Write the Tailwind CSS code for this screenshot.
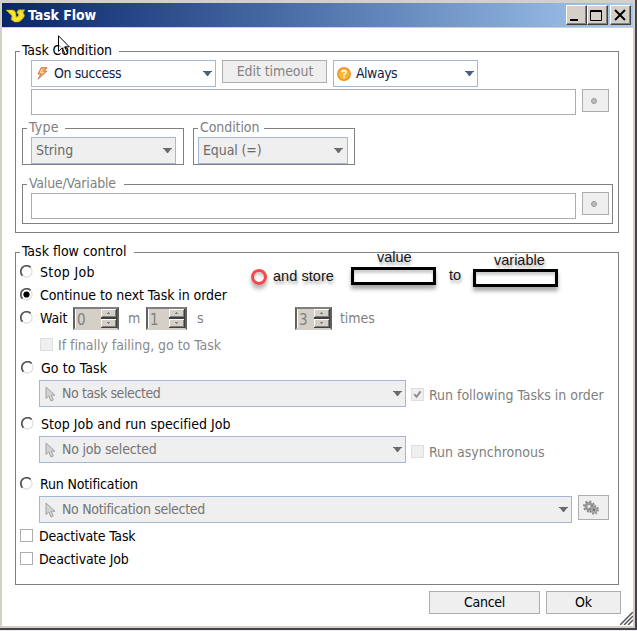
<!DOCTYPE html>
<html lang="en">
<head>
<meta charset="utf-8">
<title>Task Flow</title>
<script src="https://cdn.jsdelivr.net/npm/@tailwindcss/browser@4"></script>
</head>
<body class="w-[637px] h-[631px] overflow-hidden bg-[#ececec]">
<svg class="hidden">
  <symbol id="pointer" viewBox="0 0 11 16"><path d="M1 1V12.5L3.8 10L6 15L8.3 14L6.2 9.3H10Z" fill="#d2d2d2" stroke="#a2a2a2" stroke-width="1"/></symbol>
  <symbol id="down" viewBox="0 0 9 5"><path d="M0 0H9V1H8L5 5H4L1 1H0Z" fill="currentColor"/></symbol>
  <symbol id="radio" viewBox="0 0 13 13"><circle cx="6.5" cy="6.5" r="5.6" fill="#fff" stroke="#dcdad6" stroke-width="1.1"/><path d="M2.5 10.6A5.7 5.7 0 0 1 10.6 2.4" fill="none" stroke="#555" stroke-width="1.7"/></symbol>
  <symbol id="spin" viewBox="0 0 16 19">
    <rect width="16" height="19" fill="#404040"/>
    <path d="M0 0H15V8H0ZM0 10H15V18H0Z" fill="#fff"/><path d="M1 1H15V8H1ZM1 11H15V18H1Z" fill="#808080"/><path d="M1 1H14V7H1ZM1 11H14V17H1Z" fill="#d4d0c8"/>
    <path d="M7 3H8V4H9V5H6V4H7Z M6 13H9V14H8V15H7V14H6Z" fill="#808080"/>
  </symbol>
</svg>

<div class="relative w-[637px] h-[630px] border-r-2 border-b-2 border-[#45424a] bg-[#d4d0c8] pt-[3px] pl-[2px] pr-[2px] font-['DejaVu_Sans_Condensed','DejaVu_Sans',sans-serif] text-[14px] tracking-[-0.08px] whitespace-nowrap text-black">

  <!-- Title bar -->
  <header class="flex h-6 items-center bg-linear-to-r from-[#0a246a] to-[#a6caf0] pl-[4px] pr-[2px]">
    <svg class="mr-[2px] mt-[2px] shrink-0" width="20" height="14" viewBox="0 0 20 14"><path d="M0 1H6C9 1 10 3 10 6V7.5C11.5 8 12.8 7 12.3 5.5L10.8 3.2L12.5 .8H18.8L17.2 3.5L18.6 6.5C18 9 15 12 12.5 13H8.5L5 10.5L6 7L3.5 4.5Z" fill="#f3d91c" stroke="#a99a28" stroke-width=".5"/><path d="M3 2.5H6L8 5V9.5L10 11L14 9L15.5 6.5L14.5 3" fill="none" stroke="#fff04a" stroke-width="1.2"/></svg>
    <h1 class="flex-1 text-[14px] leading-6 font-bold text-white tracking-[-0.08px]">Task Flow</h1>
    <div class="flex">
      <div class="h-5 w-[21px] border border-t-white border-l-white border-r-[#404040] border-b-[#404040] bg-[#d4d0c8]"><svg class="size-full" viewBox="0 0 19 18"><path d="M18.5 0V17.5H0" fill="none" stroke="#808080"/><path d="M3 13H11V15H3Z"/></svg></div>
      <div class="h-5 w-[21px] border border-t-white border-l-white border-r-[#404040] border-b-[#404040] bg-[#d4d0c8]"><svg class="size-full" viewBox="0 0 19 18"><path d="M18.5 0V17.5H0" fill="none" stroke="#808080"/><path d="M2.5 4.5H13.5V14.5H2.5ZM2 5.5H14" fill="none" stroke="#000"/></svg></div>
      <div class="ml-[2px] h-5 w-[21px] border border-t-white border-l-white border-r-[#404040] border-b-[#404040] bg-[#d4d0c8]"><svg class="size-full" viewBox="0 0 19 18"><path d="M18.5 0V17.5H0" fill="none" stroke="#808080"/><path d="M4 4L14 14M14 4L4 14" fill="none" stroke="#000" stroke-width="1.9"/></svg></div>
    </div>
  </header>

  <main class="relative mt-px h-[598px] bg-white pt-[23px] pl-[13px] pr-[14px]">
    <!-- Task condition -->
    <section class="relative h-[182px] border border-[#808080] pt-2 pl-[15px]">
      <h2 class="absolute left-[4px] top-[-12px] w-[99px] bg-white pl-[2px] leading-5">Task Condition</h2>
      <div class="flex items-start">
        <div class="flex h-[27px] w-[185px] items-center border border-[#a4b8d6] bg-white pl-[5px] pr-[3px] text-[#101c48]">
          <svg width="11" height="13" viewBox="0 0 11 13"><path d="M4.2 .7H10L7.2 4.2H9.8L1 12.2L3.8 7H1Z" fill="#f6b04c" stroke="#c96a5b" stroke-width=".9"/><path d="M5 2L3.5 5.5H7" fill="none" stroke="#ffe5a0"/></svg>
          <span class="ml-[6px] flex-1 tracking-[-0.4px]">On success</span>
          <svg class="h-[5px] w-[9px] text-[#48607c]"><use href="#down"/></svg>
        </div>
        <button class="ml-[6px] h-[23px] w-[105px] border border-[#adadad] bg-[#efefef] pl-px text-[#838383]">Edit timeout</button>
        <div class="ml-[6px] flex h-[27px] w-[145px] items-center border border-[#a4b8d6] bg-white pl-[3px] pr-[3px] text-[#101c48]">
          <svg width="14" height="14" viewBox="0 0 14 14"><circle cx="7" cy="7" r="6.3" fill="#fbb52d" stroke="#ee8a2c" stroke-width="1.2"/><path d="M4.9 5.4Q5 3.5 7 3.5Q9.1 3.6 9.1 5.3Q9 6.4 7.1 7.3V8.5M7.1 9.6V11" fill="none" stroke="#fff" stroke-width="1.5"/></svg>
          <span class="ml-[5px] flex-1 tracking-[-0.5px]">Always</span>
          <svg class="h-[5px] w-[9px] text-[#48607c]"><use href="#down"/></svg>
        </div>
      </div>
      <div class="mt-[2px] flex items-start">
        <div class="h-[26px] w-[545px] border border-[#adadad]"></div>
        <div class="ml-[6px] flex h-[23px] w-[27px] items-center border border-[#adadad] bg-[#efefef] pl-[8px]"><div class="size-[6px] rounded-full border border-[#999] bg-[#bbb]"></div></div>
      </div>
      <div class="-ml-[9px] mt-[13px] flex text-[#808080]">
        <div class="relative h-[37px] w-[162px] border border-[#808080] pt-2 pl-2">
          <h3 class="absolute left-[4px] top-[-12px] w-[38px] bg-white pl-[2px] leading-5 tracking-[0.3px]">Type</h3>
          <div class="flex h-[27px] w-[145px] items-center border border-[#a4b8d6] bg-[#efefef] pl-1 pr-[3px] text-[#6a6a6a]"><span class="flex-1">String</span><svg class="h-[5px] w-[9px]"><use href="#down"/></svg></div>
        </div>
        <div class="relative ml-[9px] h-[37px] w-[162px] border border-[#808080] pt-2 pl-1">
          <h3 class="absolute left-[4px] top-[-12px] w-[66px] bg-white pl-[2px] leading-5">Condition</h3>
          <div class="flex h-[27px] w-[150px] items-center border border-[#a4b8d6] bg-[#efefef] pl-1 pr-[4px] text-[#6a6a6a]"><span class="flex-1 tracking-[-0.1px]">Equal (=)</span><svg class="h-[5px] w-[9px]"><use href="#down"/></svg></div>
        </div>
      </div>
      <div class="relative -ml-[9px] mt-[19px] flex h-[40px] w-[591px] items-start border border-[#808080] pt-[7px] pl-2 text-[#808080]">
        <h3 class="absolute left-[4px] top-[-12px] w-[97px] bg-white pl-[2px] leading-5 tracking-[-0.2px]">Value/Variable</h3>
        <div class="mt-px h-[26px] w-[545px] border border-[#adadad]"></div>
        <div class="ml-[6px] flex h-[23px] w-[27px] items-center border border-[#adadad] bg-[#efefef] pl-[8px]"><div class="size-[6px] rounded-full border border-[#999] bg-[#bbb]"></div></div>
      </div>
    </section>

    <!-- Task flow control -->
    <section class="relative mt-[19px] h-[333px] border border-[#808080] pt-2">
      <h2 class="absolute left-[4px] top-[-12px] w-[114px] bg-white pl-[2px] leading-5 tracking-[0px]">Task flow control</h2>
      <div class="flex h-[23px] items-center pl-1"><svg class="mb-[2px] mr-[7px] size-[13px]"><use href="#radio"/></svg><span class="tracking-[0.35px]">Stop Job</span></div>
      <div class="flex h-[23px] items-center pl-1"><svg class="mb-[2px] mr-[7px] size-[13px]"><use href="#radio"/><circle cx="6.5" cy="6.5" r="3.1"/></svg><span>Continue to next Task in order</span></div>
      <div class="flex h-[23px] items-center pl-1 text-[#808080]">
        <svg class="mb-[2px] mr-[7px] size-[13px]"><use href="#radio"/></svg><span class="w-[33px] text-black">Wait</span>
        <div class="flex h-[23px] w-[46px] items-center border-2 border-t-[#808080] border-l-[#606060] border-r-[#606060] border-b-[#d4d0c8] bg-[#d4d0c8] text-[15px]"><span class="flex-1 border-l border-white pl-px pt-[3px] leading-4">0</span><svg class="h-[19px] w-4"><use href="#spin"/></svg></div>
        <span class="ml-[9px] w-[18px]">m</span>
        <div class="flex h-[23px] w-[41px] items-center border-2 border-t-[#808080] border-l-[#606060] border-r-[#606060] border-b-[#d4d0c8] bg-[#d4d0c8] text-[15px]"><span class="flex-1 border-l border-white pl-px pt-[3px] leading-4">1</span><svg class="h-[19px] w-4"><use href="#spin"/></svg></div>
        <span class="ml-[10px] w-[98px]">s</span>
        <div class="flex h-[23px] w-[37px] items-center border-2 border-t-[#808080] border-l-[#606060] border-r-[#606060] border-b-[#d4d0c8] bg-[#d4d0c8] text-[15px]"><span class="flex-1 border-l border-white pl-px pt-[3px] leading-4">3</span><svg class="h-[19px] w-4"><use href="#spin"/></svg></div>
        <span class="ml-2">times</span>
      </div>
      <div class="mt-1 flex h-[23px] items-center pl-6 text-[#8a8a8a]"><div class="mb-[2px] mr-[5px] size-[13px] border border-[#dedede] bg-[#efefef]"></div><span class="tracking-[-0.04px]">If finally failing, go to Task</span></div>
      <div class="flex h-[23px] items-center pl-[5px]"><svg class="mb-[2px] mr-[7px] size-[13px]"><use href="#radio"/></svg><span class="tracking-[0.1px]">Go to Task</span></div>
      <div class="flex h-[27px] items-center pl-[23px] text-[#808080]">
        <div class="flex h-[27px] w-[367px] items-center border border-[#a4b8d6] bg-[#efefef] pl-[5px] pr-[3px] text-[#747474]"><svg class="mr-[6px] h-4 w-[11px]"><use href="#pointer"/></svg><span class="flex-1 tracking-[-0.4px]">No task selected</span><svg class="h-[5px] w-[9px] text-[#6a6a6a]"><use href="#down"/></svg></div>
        <svg class="ml-[5px] mt-[2px] size-[13px]" viewBox="0 0 13 13"><rect x=".5" y=".5" width="12" height="12" fill="#efefef" stroke="#dedede"/><path d="M3.2 6.2L5.5 8.8L9.6 3.4" fill="none" stroke="#8c8c8c" stroke-width="1.9"/></svg>
        <span class="ml-[5px] mt-[3px] tracking-[-0.02px]">Run following Tasks in order</span>
      </div>
      <div class="mt-[6px] flex h-[23px] items-center pl-[5px]"><svg class="mb-[2px] mr-[7px] size-[13px]"><use href="#radio"/></svg><span class="tracking-[0.03px]">Stop Job and run specified Job</span></div>
      <div class="flex h-[27px] items-center pl-[23px] text-[#808080]">
        <div class="flex h-[27px] w-[367px] items-center border border-[#a4b8d6] bg-[#efefef] pl-[5px] pr-[3px] text-[#747474]"><svg class="mr-[6px] h-4 w-[11px]"><use href="#pointer"/></svg><span class="flex-1 tracking-[-0.2px]">No job selected</span><svg class="h-[5px] w-[9px] text-[#6a6a6a]"><use href="#down"/></svg></div>
        <div class="ml-[5px] mt-[4px] size-[13px] border border-[#dedede] bg-[#efefef]"></div>
        <span class="ml-[5px] mt-[5px] tracking-[0px]">Run asynchronous</span>
      </div>
      <div class="mt-[10px] flex h-[23px] items-center pl-1"><svg class="mb-[2px] mr-[7px] size-[13px]"><use href="#radio"/></svg><span class="tracking-[-0.15px]">Run Notification</span></div>
      <div class="flex h-[27px] items-start pl-[23px]">
        <div class="flex h-[27px] w-[533px] items-center border border-[#a4b8d6] bg-[#efefef] pl-[5px] pr-[3px] text-[#747474]"><svg class="mr-[6px] h-4 w-[11px]"><use href="#pointer"/></svg><span class="flex-1 tracking-[-0.32px]">No Notification selected</span><svg class="h-[5px] w-[9px] text-[#6a6a6a]"><use href="#down"/></svg></div>
        <div class="-mt-px ml-[6px] flex h-[25px] w-[31px] items-center border border-[#adadad] bg-[#efefef] pl-1">
          <svg width="16" height="16" viewBox="0 0 16 16"><g fill="none"><circle cx="6" cy="6.5" r="4.9" stroke="#858585" stroke-width="2.2" stroke-dasharray="1.9 1.9"/><circle cx="6" cy="6.5" r="3.1" stroke="#999" stroke-width="3"/><circle cx="11" cy="9.8" r="3.8" stroke="#777" stroke-width="2" stroke-dasharray="1.5 1.5"/><circle cx="11" cy="9.8" r="2.4" stroke="#a5a5a5" stroke-width="2.2"/></g><circle cx="11" cy="9.8" r="1.2" fill="#666"/></svg>
        </div>
      </div>
      <div class="mt-[2px] flex h-[23px] items-center pl-1"><div class="mb-[2px] mr-[6px] size-[13px] border border-[#adadad]"></div><span class="tracking-[-0.2px]">Deactivate Task</span></div>
      <div class="flex h-[23px] items-center pl-1"><div class="mb-[2px] mr-[6px] size-[13px] border border-[#adadad]"></div><span class="tracking-[-0.15px]">Deactivate Job</span></div>

      <!-- Annotation laid over the form -->
      <div class="absolute left-[235px] top-[-4px] h-[44px] w-[310px] font-['Liberation_Sans',Arial,sans-serif] text-[14.5px] leading-5 tracking-normal text-[#161616] [text-shadow:1px_3px_3px_rgba(0,0,0,.35)]">
        <div class="absolute left-0 top-[20px] size-[16px] rounded-full border-[3px] border-[#f5484c] shadow-[0_4px_4px_rgba(0,0,0,.3),inset_0_3px_3px_rgba(0,0,0,.2)]"></div>
        <span class="absolute left-[22px] top-[17px] tracking-[0.06px]">and store</span>
        <span class="absolute left-[126px] top-[-2px]">value</span>
        <div class="absolute left-[100px] top-[18px] h-[18px] w-[85px] border-[3px] border-black shadow-[0_4px_4px_rgba(0,0,0,.35),inset_0_3px_3px_rgba(0,0,0,.2)]"></div>
        <span class="absolute left-[198px] top-[16px]">to</span>
        <span class="absolute left-[243px] top-[1px]">variable</span>
        <div class="absolute left-[222px] top-[20px] h-[18px] w-[85px] border-[3px] border-black shadow-[0_4px_4px_rgba(0,0,0,.35),inset_0_3px_3px_rgba(0,0,0,.2)]"></div>
      </div>
    </section>

    <!-- Dialog buttons -->
    <footer class="-mr-[2px] mt-[6px] flex justify-end gap-[6px]">
      <button class="h-[23px] w-[111px] border border-[#adadad] bg-[#efefef] tracking-[-0.3px]">Cancel</button>
      <button class="h-[23px] w-[75px] border border-[#adadad] bg-[#efefef]">Ok</button>
    </footer>
    <svg class="absolute right-0 bottom-[1px]" width="13" height="13" viewBox="0 0 13 13"><path d="M0 13L13 0M4 13L13 4M8 13L13 8" stroke="#55555a" stroke-width="1.5"/></svg>
  </main>

  <!-- Mouse pointer -->
  <svg class="absolute left-[58px] top-[35px]" width="12" height="21" viewBox="0 0 12 21"><path d="M.5 .8V16.3L4.2 12.8L7.3 19.6L9.8 18.5L6.8 11.8H11.3Z" fill="#fff" fill-opacity=".6" stroke="#000"/></svg>
</div>
</body>
</html>
